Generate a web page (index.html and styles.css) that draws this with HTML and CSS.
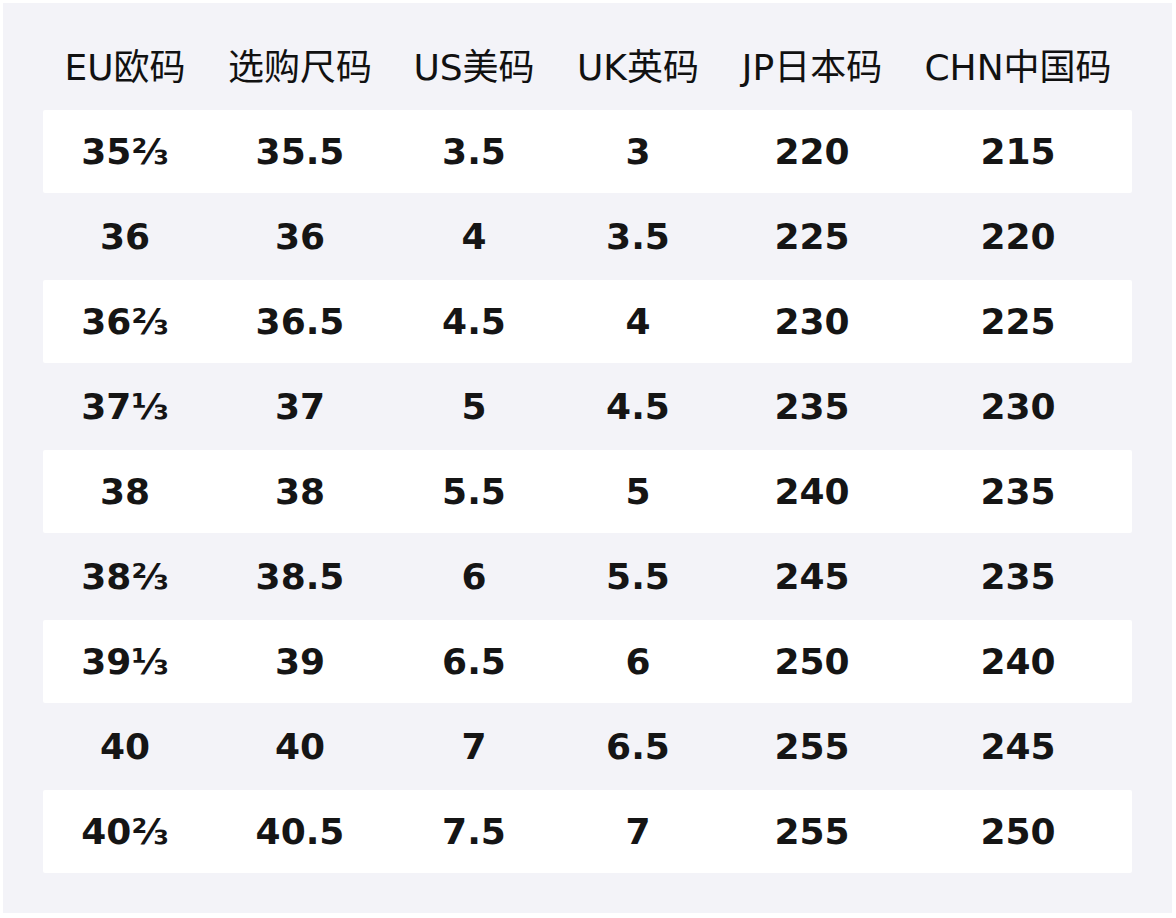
FILE: index.html
```html
<!DOCTYPE html>
<html lang="zh">
<head>
<meta charset="utf-8">
<title>尺码对照表</title>
<link rel="stylesheet" href="styles.css">
</head>
<body>
<div class="chart">
  <div class="row head">
    <div class="cell">EU欧码</div>
    <div class="cell">选购尺码</div>
    <div class="cell">US美码</div>
    <div class="cell">UK英码</div>
    <div class="cell">JP日本码</div>
    <div class="cell">CHN中国码</div>
  </div>
  <div class="row light"><div class="cell">35⅔</div><div class="cell">35.5</div><div class="cell">3.5</div><div class="cell">3</div><div class="cell">220</div><div class="cell">215</div></div>
  <div class="row"><div class="cell">36</div><div class="cell">36</div><div class="cell">4</div><div class="cell">3.5</div><div class="cell">225</div><div class="cell">220</div></div>
  <div class="row light"><div class="cell">36⅔</div><div class="cell">36.5</div><div class="cell">4.5</div><div class="cell">4</div><div class="cell">230</div><div class="cell">225</div></div>
  <div class="row"><div class="cell">37⅓</div><div class="cell">37</div><div class="cell">5</div><div class="cell">4.5</div><div class="cell">235</div><div class="cell">230</div></div>
  <div class="row light"><div class="cell">38</div><div class="cell">38</div><div class="cell">5.5</div><div class="cell">5</div><div class="cell">240</div><div class="cell">235</div></div>
  <div class="row"><div class="cell">38⅔</div><div class="cell">38.5</div><div class="cell">6</div><div class="cell">5.5</div><div class="cell">245</div><div class="cell">235</div></div>
  <div class="row light"><div class="cell">39⅓</div><div class="cell">39</div><div class="cell">6.5</div><div class="cell">6</div><div class="cell">250</div><div class="cell">240</div></div>
  <div class="row"><div class="cell">40</div><div class="cell">40</div><div class="cell">7</div><div class="cell">6.5</div><div class="cell">255</div><div class="cell">245</div></div>
  <div class="row light"><div class="cell">40⅔</div><div class="cell">40.5</div><div class="cell">7.5</div><div class="cell">7</div><div class="cell">255</div><div class="cell">250</div></div>
</div>
</body>
</html>
```
FILE: styles.css
```css
html, body {
  margin: 0;
  padding: 0;
  background: #ffffff;
}
body {
  padding: 3px;
}
.chart {
  box-sizing: border-box;
  width: 1169px;
  height: 910px;
  background: #f3f3f8;
  padding: 40px 40px 40px 40px;
  display: flex;
  flex-direction: column;
  gap: 2px;
  font-family: "DejaVu Sans", "Noto Sans CJK SC", sans-serif;
  color: #151515;
}
.row {
  display: grid;
  grid-template-columns: 164px 186px 162px 166px 182px 230px;
  height: 83px;
  align-items: center;
  font-size: 36px;
  font-weight: bold;
  line-height: 42px;
}
.row.light {
  background: #ffffff;
  border-radius: 2px;
}
.row.head {
  height: 65px;
  align-items: start;
  padding-top: 4px;
  box-sizing: border-box;
  font-weight: normal;
  color: #111111;
}
.cell {
  text-align: center;
  white-space: nowrap;
}
```
